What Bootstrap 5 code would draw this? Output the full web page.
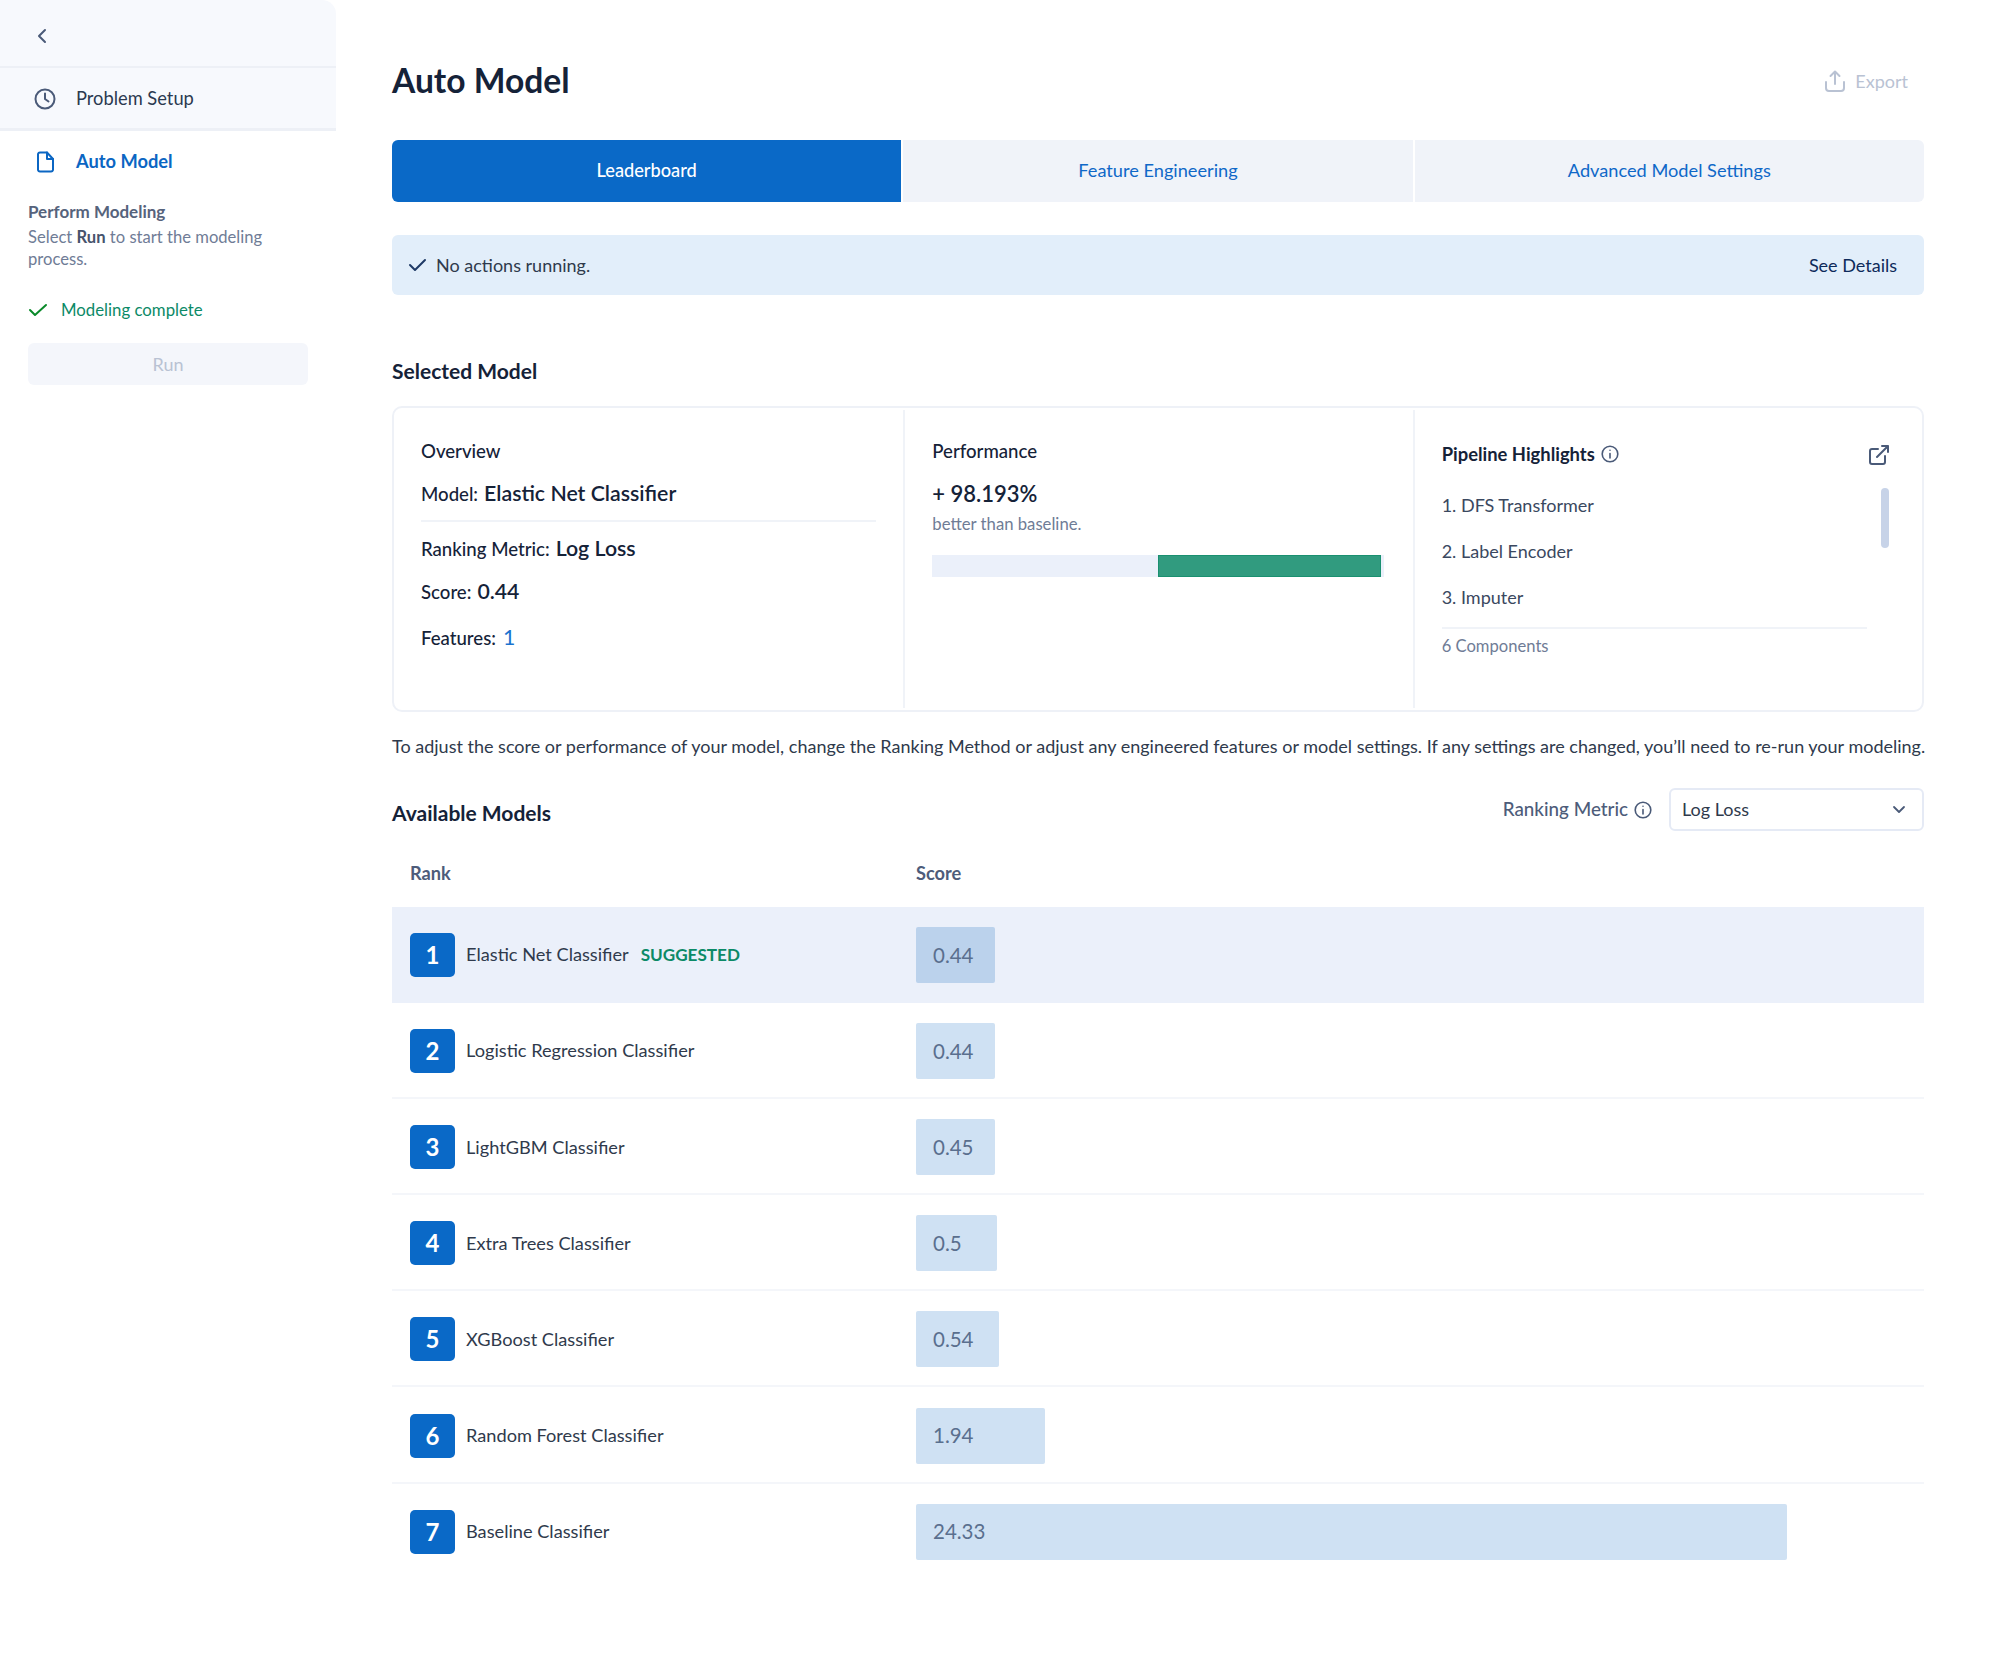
<!DOCTYPE html>
<html lang="en">
<head>
<meta charset="utf-8">
<title>Auto Model</title>
<link href="https://cdn.jsdelivr.net/npm/bootstrap@5.3.0/dist/css/bootstrap.min.css" rel="stylesheet">
<style>
body{font-family:"Lato","Liberation Sans",sans-serif;font-size:18px;color:#2f3a4c;background:#fff;min-height:1668px}
svg{display:block;flex:none}
.side{width:336px;flex:none}
.side-top{background:#f7f9fd;border-top-right-radius:14px}
.side-back{height:68px;padding:5px 0 0 34px;border-bottom:2px solid #edf0f6}
.side-link{height:63px;padding:1px 0 0 34px;gap:20px;color:#2b3950;font-size:18.300px}
.side-link.done{background:#f7f9fd;border-bottom:3px solid #edf0f6}
.side-link.now{color:#0b66c3;font-weight:700;height:61px;padding-top:0}
.side-body{padding:0 28px}
.side-h{font-size:17px;font-weight:700;color:#56637c;line-height:22px;margin-top:9px}
.side-p{font-size:16.600px;color:#6f7c96;line-height:22px;margin-top:3px}
.side-p b{color:#46536c}
.side-ok{color:#0c8a67;font-size:16.800px;gap:13px;margin-top:27px;height:26px}
.btn.side-run:disabled{display:block;width:280px;height:42px;margin-top:20px;background:#f4f6fb;border:0;color:#b9c2d3;font-size:18px;border-radius:6px;opacity:1}
.main{padding:50px 76px 0 56px;flex:1;min-width:0}
.head{height:60px;margin-bottom:30px}
.title{font-size:33.600px;font-weight:700;color:#152238;margin:0}
.export{color:#b9c2d3;gap:10px;padding:2px 16px 0 0;font-size:18px}
.tabs{height:62px;gap:2px}
.tabs .nav-link{height:62px;border-radius:0;background:#f0f3f9;color:#0f68c8;font-size:18.200px;line-height:30px;padding:15px 16px 17px}
.tabs .nav-item:first-child .nav-link{border-radius:6px 0 0 6px}
.tabs .nav-item:last-child .nav-link{border-radius:0 6px 6px 0}
.tabs .nav-link.active{background:#0a69c7;color:#fff;font-weight:500}
.status{height:60px;margin:33px 0 0;padding:0 27px 0 16px;background:#e2eefa;border:0;border-radius:6px;color:#2f3a4c}
.status svg{margin-right:1px}
.status a{color:#0d2a5a;text-decoration:none}
.sec{font-size:21px;font-weight:700;color:#152238;line-height:30px;margin:0}
.sel{margin-top:61px;margin-bottom:20px}
.panel{height:306px;border:2px solid #eef1f7;border-radius:10px}
.panel .row{height:100%}
.panel .col-4{padding:17.500px 27px 0;margin:2px 0;height:298px}
.panel .col-4+.col-4{border-left:2px solid #f0f3f8}
.lab{font-weight:500;color:#152238;line-height:26px;margin-top:10px;font-size:18.600px}
.kv{line-height:30px;color:#152238;font-weight:500;gap:6px;font-size:18.600px}
.kv span:last-child{font-size:21.300px;font-weight:600}
.kv-1{margin-top:14.500px;padding-bottom:11px;border-bottom:2px solid #f0f3f8}
.kv-2{margin-top:10.500px}
.kv-3{margin-top:12.500px}
.kv-4{margin-top:14.500px}
.kv-4 span:last-child{color:#1b73cf;font-weight:400;margin-left:1px}
.big{font-size:22px;font-weight:600;color:#152238;line-height:30px;margin-top:15px}
.mut{font-size:16.700px;color:#6f7c96;line-height:22px;margin-top:4.500px}
.perf{height:22px;margin-top:20px;background:#ebf0fa;border-radius:0;width:452px;padding-right:3px}
.perf .spacer{width:226px}
.perf .progress-bar{width:223px;background:#319b7f;border:1px solid #1a9070}
.pl{margin-top:13.500px;line-height:26px;font-weight:700;color:#152238;gap:6px;font-size:18.400px}
.pl-items{width:425px;margin-top:25px;padding-bottom:17px;border-bottom:2px solid #f0f3f8}
.pl-items div{line-height:26px;color:#3a4860;margin-bottom:20px}
.pl-items div:last-child{margin-bottom:0}
.thumb{top:78px;right:33px;width:8px;height:60px;background:#c7d3e8;border-radius:4px}
.ext{top:35px;right:33px}
.count{font-size:16.600px;color:#6f7c96;line-height:26px;margin-top:4px}
.note{line-height:26px;margin:21px 0 0;color:#2f3a4c;white-space:nowrap}
.avail{height:43px;margin-top:29px}
.avail .sec{padding-top:6px}
.rm{color:#4d5c7a;font-weight:500;gap:6px;margin-right:17px;font-size:18.800px}
.avail .form-select{width:255px;height:43px;padding:0 11px;border:2px solid #e5eaf5;border-radius:6px;color:#2f3a4c;font-size:18px;background-position:right 15px center;background-size:16px 16px;background-image:url("data:image/svg+xml,%3csvg xmlns='http://www.w3.org/2000/svg' viewBox='0 0 16 16'%3e%3cpath fill='none' stroke='%234a5a78' stroke-linecap='round' stroke-linejoin='round' stroke-width='1.800' d='m3 5 5 5 5-5'/%3e%3c/svg%3e")}
.thead{height:76px;padding-top:9px;color:#4d5c7a;font-weight:700}
.rank{width:524px;padding-left:18px;font-size:18.200px}
.thead .rank+div{font-size:18.200px}
.rk{height:96.100px;box-shadow:inset 0 -2px 0 #f4f6fa}
.rk:last-child{box-shadow:none}
.rk.on{background:#ebf0fa;box-shadow:none}
.num{width:45px;height:44px;background:#0a69c7;color:#fff;border-radius:5px;font-size:24px;font-weight:700;margin-right:11px}
.ok{color:#0c8a67;font-weight:700;margin-left:12px;font-size:17.100px}
.score{height:56px;background:#cfe1f3;border-radius:2px;padding-left:17px;font-size:20.500px;color:#5a6f8e}
.on .score{background:#bbd2ec}
</style>
</head>
<body>
<div class="d-flex">
  <aside class="side">
    <div class="side-top">
      <div class="side-back d-flex align-items-center">
        <svg width="18" height="18" viewBox="0 0 18 18" fill="none" stroke="#4a5a78" stroke-width="2" stroke-linecap="round" stroke-linejoin="round"><path d="M11 3 5 9l6 6"/></svg>
      </div>
      <div class="side-link done d-flex align-items-center">
        <svg width="22" height="22" viewBox="0 0 22 22" fill="none" stroke="#4a5a78" stroke-width="2" stroke-linecap="round" stroke-linejoin="round"><circle cx="11" cy="11" r="9.500"/><path d="M11 5.500V11l3.500 2.500"/></svg>
        <span>Problem Setup</span>
      </div>
    </div>
    <div class="side-link now d-flex align-items-center">
      <svg width="22" height="22" viewBox="0 0 22 22" fill="none" stroke="#0b66c3" stroke-width="2" stroke-linecap="round" stroke-linejoin="round"><path d="M4 3a2 2 0 0 1 2-1.500h7L19 8v11a2 2 0 0 1-2 1.500H6A2 2 0 0 1 4 19z"/><path d="M13 1.500V8h6"/></svg>
      <span>Auto Model</span>
    </div>
    <div class="side-body">
      <div class="side-h">Perform Modeling</div>
      <div class="side-p">Select <b>Run</b> to start the modeling process.</div>
      <div class="side-ok d-flex align-items-center">
        <svg width="20" height="14" viewBox="0 0 20 14" fill="none" stroke="#0a8a2a" stroke-width="2" stroke-linecap="round" stroke-linejoin="round"><path d="M2 7l5 5L18 2"/></svg>
        <span>Modeling complete</span>
      </div>
      <button class="btn side-run" disabled>Run</button>
    </div>
  </aside>
  <main class="main">
    <div class="head d-flex align-items-center justify-content-between">
      <h1 class="title">Auto Model</h1>
      <div class="export d-flex align-items-center">
        <svg width="20" height="22" viewBox="0 0 20 22" fill="none" stroke="#b9c2d3" stroke-width="2" stroke-linecap="round" stroke-linejoin="round"><path d="M10 14V2M5.500 6 10 1.500 14.500 6M1 12v6a3 3 0 0 0 3 3h12a3 3 0 0 0 3-3v-6"/></svg>
        <span>Export</span>
      </div>
    </div>
    <ul class="nav nav-pills nav-justified tabs">
      <li class="nav-item"><a class="nav-link active" href="#">Leaderboard</a></li>
      <li class="nav-item"><a class="nav-link" href="#">Feature Engineering</a></li>
      <li class="nav-item"><a class="nav-link" href="#">Advanced Model Settings</a></li>
    </ul>
    <div class="alert status d-flex align-items-center justify-content-between">
      <div class="d-flex align-items-center gap-2">
        <svg width="19" height="14" viewBox="0 0 19 14" fill="none" stroke="#1f3a66" stroke-width="2" stroke-linecap="round" stroke-linejoin="round"><path d="M2 7l5 5L17 2"/></svg>
        <span>No actions running.</span>
      </div>
      <a href="#">See Details</a>
    </div>
    <h2 class="sec sel">Selected Model</h2>
    <div class="card panel">
      <div class="row g-0">
        <div class="col-4">
          <div class="lab">Overview</div>
          <div class="kv kv-1 d-flex align-items-baseline"><span>Model:</span><span>Elastic Net Classifier</span></div>
          <div class="kv kv-2 d-flex align-items-baseline"><span>Ranking Metric:</span><span>Log Loss</span></div>
          <div class="kv kv-3 d-flex align-items-baseline"><span>Score:</span><span>0.44</span></div>
          <div class="kv kv-4 d-flex align-items-baseline"><span>Features:</span><span>1</span></div>
        </div>
        <div class="col-4">
          <div class="lab">Performance</div>
          <div class="big">+ 98.193%</div>
          <div class="mut">better than baseline.</div>
          <div class="progress perf"><div class="spacer"></div><div class="progress-bar"></div></div>
        </div>
        <div class="col-4 position-relative">
          <div class="pl d-flex align-items-center">Pipeline Highlights
            <svg width="18" height="18" viewBox="0 0 18 18" fill="none" stroke="#4a5a78" stroke-width="1.600" stroke-linecap="round"><circle cx="9" cy="9" r="7.800"/><path d="M9 8.500v4.500M9 5.200v.1"/></svg>
          </div>
          <svg class="ext position-absolute" width="20" height="20" viewBox="0 0 20 20" fill="none" stroke="#4a5a78" stroke-width="2" stroke-linecap="round" stroke-linejoin="round"><path d="M16 11v6a2 2 0 0 1-2 2H3a2 2 0 0 1-2-2V6a2 2 0 0 1 2-2h6M13 1h6v6M19 1 8 12"/></svg>
          <div class="thumb position-absolute"></div>
          <div class="pl-items">
            <div>1. DFS Transformer</div>
            <div>2. Label Encoder</div>
            <div>3. Imputer</div>
          </div>
          <div class="count">6 Components</div>
        </div>
      </div>
    </div>
    <p class="note">To adjust the score or performance of your model, change the Ranking Method or adjust any engineered features or model settings. If any settings are changed, you’ll need to re-run your modeling.</p>
    <div class="avail d-flex align-items-center justify-content-between">
      <h2 class="sec">Available Models</h2>
      <div class="d-flex align-items-center">
        <div class="rm d-flex align-items-center">Ranking Metric
          <svg width="18" height="18" viewBox="0 0 18 18" fill="none" stroke="#4a5a78" stroke-width="1.600" stroke-linecap="round"><circle cx="9" cy="9" r="7.800"/><path d="M9 8.500v4.500M9 5.200v.1"/></svg>
        </div>
        <select class="form-select"><option>Log Loss</option></select>
      </div>
    </div>
    <div class="thead d-flex align-items-center"><div class="rank">Rank</div><div class="flex-grow-1">Score</div></div>
    <div class="rows">
      <div class="rk on d-flex align-items-center"><div class="rank d-flex align-items-center"><div class="num d-flex align-items-center justify-content-center">1</div>Elastic Net Classifier<span class="ok">SUGGESTED</span></div><div class="score d-flex align-items-center" style="width:79px">0.44</div></div>
      <div class="rk d-flex align-items-center"><div class="rank d-flex align-items-center"><div class="num d-flex align-items-center justify-content-center">2</div>Logistic Regression Classifier</div><div class="score d-flex align-items-center" style="width:79px">0.44</div></div>
      <div class="rk d-flex align-items-center"><div class="rank d-flex align-items-center"><div class="num d-flex align-items-center justify-content-center">3</div>LightGBM Classifier</div><div class="score d-flex align-items-center" style="width:79px">0.45</div></div>
      <div class="rk d-flex align-items-center"><div class="rank d-flex align-items-center"><div class="num d-flex align-items-center justify-content-center">4</div>Extra Trees Classifier</div><div class="score d-flex align-items-center" style="width:81px">0.5</div></div>
      <div class="rk d-flex align-items-center"><div class="rank d-flex align-items-center"><div class="num d-flex align-items-center justify-content-center">5</div>XGBoost Classifier</div><div class="score d-flex align-items-center" style="width:83px">0.54</div></div>
      <div class="rk d-flex align-items-center"><div class="rank d-flex align-items-center"><div class="num d-flex align-items-center justify-content-center">6</div>Random Forest Classifier</div><div class="score d-flex align-items-center" style="width:129px">1.94</div></div>
      <div class="rk d-flex align-items-center"><div class="rank d-flex align-items-center"><div class="num d-flex align-items-center justify-content-center">7</div>Baseline Classifier</div><div class="score d-flex align-items-center" style="width:871px">24.33</div></div>
    </div>
  </main>
</div>
<script src="https://cdn.jsdelivr.net/npm/bootstrap@5.3.0/dist/js/bootstrap.bundle.min.js"></script>
</body>
</html>
